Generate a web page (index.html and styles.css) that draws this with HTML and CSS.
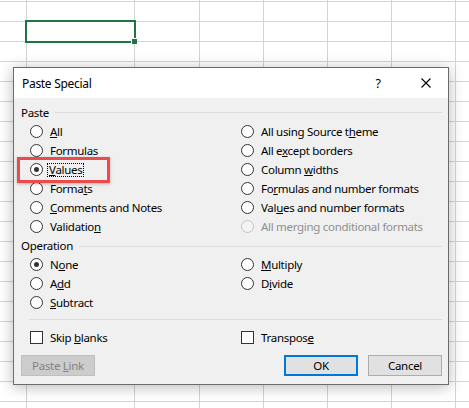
FILE: index.html
```html
<!DOCTYPE html>
<html>
<head>
<meta charset="utf-8">
<link rel="stylesheet" href="styles.css">
</head>
<body>
<div class="sheet">
  <div class="col c0"></div>
  <div class="col c1"></div>
  <div class="col c2"></div>
  <div class="col c3"></div>
  <div class="col c3"></div>
  <div class="col c3"></div>
  <div class="col c3"></div>
  <div class="col c4"></div>
</div>
<div class="selected"><span class="handle"></span></div>

<div class="dialog">
  <div class="titlebar">
    <span class="title">Paste Special</span>
    <span class="help">?</span>
    <svg class="close" width="10" height="10" viewBox="0 0 10 10"><path d="M0.5 0.5 L9.5 9.5 M9.5 0.5 L0.5 9.5" stroke="#000" stroke-width="1.1" fill="none"/></svg>
  </div>
  <div class="body">
    <div class="group-head"><span>Paste</span><i class="rule"></i></div>
    <div class="options">
      <div class="opt"><span class="radio"></span><span><u>A</u>ll</span></div>
      <div class="opt"><span class="radio"></span><span>All using Source t<u>h</u>eme</span></div>
      <div class="opt"><span class="radio"></span><span>Formulas</span></div>
      <div class="opt"><span class="radio"></span><span>All e<u>x</u>cept borders</span></div>
      <div class="opt"><span class="radio on"></span><span class="focus"><u>V</u>alues</span></div>
      <div class="opt"><span class="radio"></span><span>Column <u>w</u>idths</span></div>
      <div class="opt"><span class="radio"></span><span>Forma<u>t</u>s</span></div>
      <div class="opt"><span class="radio"></span><span>Fo<u>r</u>mulas and number formats</span></div>
      <div class="opt"><span class="radio"></span><span><u>C</u>omments and Notes</span></div>
      <div class="opt"><span class="radio"></span><span>Val<u>u</u>es and number formats</span></div>
      <div class="opt"><span class="radio"></span><span>Validatio<u>n</u></span></div>
      <div class="opt disabled"><span class="radio"></span><span>All mergin<u>g</u> conditional formats</span></div>
    </div>
    <div class="group-head op"><span>Operation</span><i class="rule"></i></div>
    <div class="options">
      <div class="opt"><span class="radio on"></span><span>N<u>o</u>ne</span></div>
      <div class="opt"><span class="radio"></span><span><u>M</u>ultiply</span></div>
      <div class="opt"><span class="radio"></span><span>A<u>d</u>d</span></div>
      <div class="opt"><span class="radio"></span><span>D<u>i</u>vide</span></div>
      <div class="opt"><span class="radio"></span><span><u>S</u>ubtract</span></div>
    </div>
    <div class="sep"></div>
    <div class="options checks">
      <div class="opt"><span class="check"></span><span>Skip <u>b</u>lanks</span></div>
      <div class="opt"><span class="check"></span><span>Transpos<u>e</u></span></div>
    </div>
    <div class="buttons">
      <button class="btn disabled">Paste <u>L</u>ink</button>
      <span class="spacer"></span>
      <button class="btn default">OK</button>
      <button class="btn">Cancel</button>
    </div>
  </div>
</div>
<div class="highlight"></div>
</body>
</html>
```
FILE: styles.css
```css
html, body {
  margin: 0;
  padding: 0;
  width: 469px;
  height: 408px;
  overflow: hidden;
  background: #fff;
  font-family: "Noto Sans", "DejaVu Sans", sans-serif;
}

.sheet {
  display: flex;
  height: 408px;
  background-image: repeating-linear-gradient(to bottom, #d4d4d4 0 1px, transparent 1px 20px);
  background-position: 0 1px;
}
.col { flex: none; height: 100%; border-left: 1px solid #d4d4d4; box-sizing: border-box; }
.c0 { width: 26px; border-left: none; }
.c1 { width: 108px; }
.c2 { width: 65px; }
.c3 { width: 64px; }
.c4 { width: 14px; }

.selected {
  position: absolute;
  left: 25px;
  top: 20px;
  width: 111px;
  height: 23px;
  box-sizing: border-box;
  border: 2px solid #217346;
}
.handle {
  position: absolute;
  right: -3px;
  bottom: -3px;
  width: 5px;
  height: 5px;
  background: #217346;
  border-left: 1px solid #fff;
  border-top: 1px solid #fff;
}

.dialog {
  position: absolute;
  left: 13px;
  top: 67px;
  width: 436px;
  height: 318px;
  box-sizing: border-box;
  border: 1px solid #6b6b6b;
  background: #f0f0f0;
  box-shadow: 0 2px 14px rgba(0,0,0,0.28);
  display: flex;
  flex-direction: column;
  font-size: 11.5px;
  letter-spacing: -0.3px;
  color: #000;
}
.titlebar {
  height: 30px;
  background: #fff;
  display: flex;
  align-items: center;
  padding-left: 8px;
  flex: none;
}
.title { flex: 1; font-size: 12px; }
.help { width: 12px; text-align: center; font-size: 12.5px; margin-right: 37px; }
.close { margin-right: 17px; }

.body {
  padding: 4px 6px 7px 7px;
  display: flex;
  flex-direction: column;
  flex: 1;
}
.group-head {
  height: 20px;
  display: flex;
  align-items: center;
}
.group-head.op { height: 19px; margin-top: 0; }
.rule {
  flex: 1;
  height: 0;
  border-top: 1px solid #dcdcdc;
  margin-left: 6px;
  margin-top: 1px;
}
.options {
  display: grid;
  grid-template-columns: 211px 1fr;
  padding-left: 9px;
}
.opt {
  height: 19px;
  display: flex;
  align-items: center;
  gap: 7px;
  white-space: nowrap;
}
.radio {
  width: 13px;
  height: 13px;
  box-sizing: border-box;
  border: 1px solid #333;
  border-radius: 50%;
  background: #fff;
  flex: none;
  position: relative;
}
.radio.on::after {
  content: "";
  position: absolute;
  left: 3px;
  top: 3px;
  width: 5px;
  height: 5px;
  border-radius: 50%;
  background: #333;
}
.disabled { color: #8f8f8f; }
.opt.disabled .radio { border-color: #c2c2c2; background: #f4f4f4; }
.focus {
  outline: 1px dotted #000;
  outline-offset: 0;
  margin-left: -2px;
  padding: 0 1px;
  line-height: 12px;
}
.sep {
  margin: 7px 0 0 8px;
  border-top: 1px solid #dcdcdc;
}
.checks { margin-top: 8px; }
.check {
  width: 13px;
  height: 13px;
  box-sizing: border-box;
  border: 1px solid #333;
  background: #fff;
  flex: none;
}
.buttons {
  display: flex;
  gap: 10px;
  margin-top: 8px;
}
.spacer { flex: 1; }
.btn {
  width: 74px;
  height: 21px;
  box-sizing: border-box;
  border: 1px solid #adadad;
  background: #e1e1e1;
  font: inherit;
  letter-spacing: inherit;
  color: #000;
  padding: 0;
}
.btn.default { border: 2px solid #0078d7; }
.btn.disabled { background: #cccccc; border-color: #bfbfbf; color: #838383; }

.highlight {
  position: absolute;
  left: 17px;
  top: 157px;
  width: 93px;
  height: 26px;
  box-sizing: border-box;
  border: 3px solid #ec4b4b;
  box-shadow: 0 1px 3px rgba(0,0,0,0.25);
}
```
